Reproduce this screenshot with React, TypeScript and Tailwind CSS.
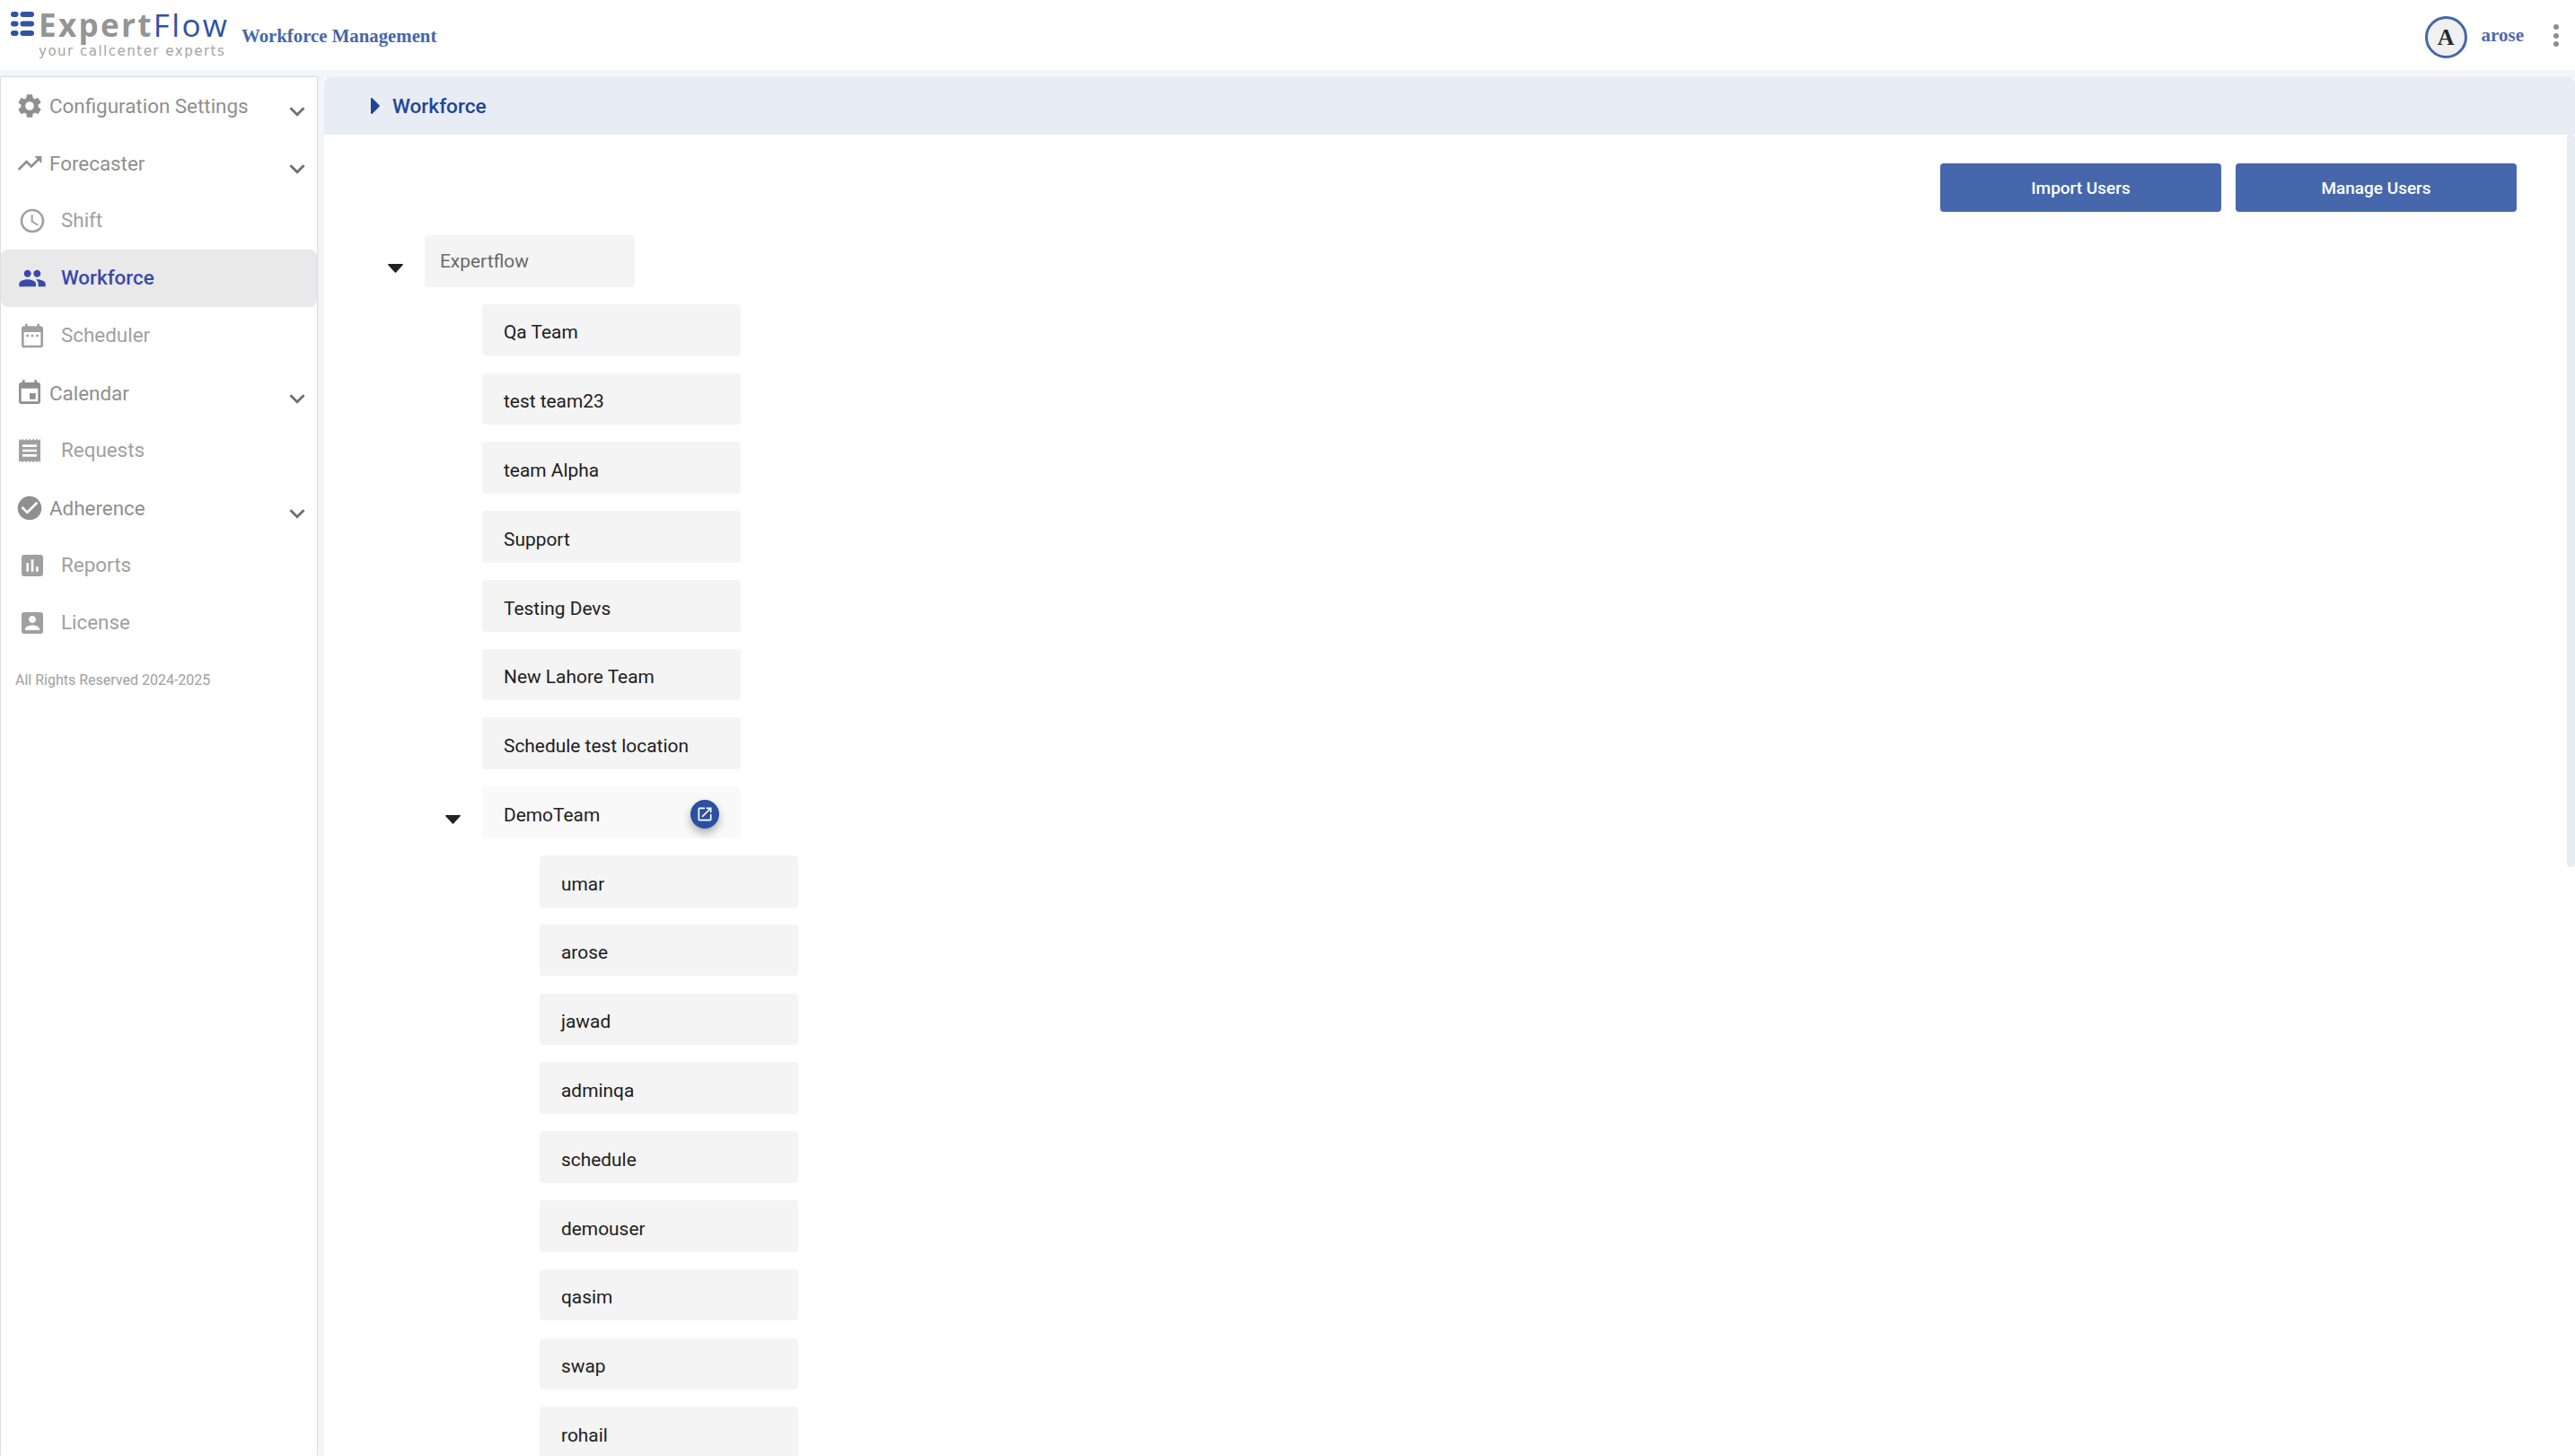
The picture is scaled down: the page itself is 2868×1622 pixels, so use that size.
import React from 'react';

const paths = {
  settings: 'M19.14 12.94c.04-.3.06-.61.06-.94 0-.32-.02-.64-.07-.94l2.03-1.58c.18-.14.23-.41.12-.61l-1.92-3.32c-.12-.22-.37-.29-.59-.22l-2.39.96c-.5-.38-1.03-.7-1.62-.94l-.36-2.54c-.04-.24-.24-.41-.48-.41h-3.84c-.24 0-.43.17-.47.41l-.36 2.54c-.59.24-1.13.57-1.62.94l-2.39-.96c-.22-.08-.47 0-.59.22L2.74 8.87c-.12.21-.08.47.12.61l2.03 1.58c-.05.3-.09.63-.09.94s.02.64.07.94l-2.03 1.58c-.18.14-.23.41-.12.61l1.92 3.32c.12.22.37.29.59.22l2.39-.96c.5.38 1.03.7 1.62.94l.36 2.54c.05.24.24.41.48.41h3.84c.24 0 .44-.17.47-.41l.36-2.54c.59-.24 1.13-.56 1.62-.94l2.39.96c.22.08.47 0 .59-.22l1.92-3.32c.12-.22.07-.47-.12-.61l-2.01-1.58zM12 15.6c-1.98 0-3.6-1.62-3.6-3.6s1.62-3.6 3.6-3.6 3.6 1.62 3.6 3.6-1.62 3.6-3.6 3.6z',
  trending: 'M16 6l2.29 2.29-4.88 4.88-4-4L2 16.59 3.41 18l6-6 4 4 6.3-6.29L22 12V6z',
  clock: 'M11.99 2C6.47 2 2 6.48 2 12s4.47 10 9.99 10C17.52 22 22 17.52 22 12S17.52 2 11.99 2zM12 20c-4.42 0-8-3.58-8-8s3.58-8 8-8 8 3.58 8 8-3.58 8-8 8zM12.5 7H11v6l5.25 3.15.75-1.23-4.5-2.67z',
  people: 'M16 11c1.66 0 2.99-1.34 2.99-3S17.66 5 16 5c-1.66 0-3 1.34-3 3s1.34 3 3 3zm-8 0c1.66 0 2.99-1.34 2.99-3S9.66 5 8 5C6.34 5 5 6.34 5 8s1.34 3 3 3zm0 2c-2.33 0-7 1.17-7 3.5V19h14v-2.5c0-2.33-4.67-3.5-7-3.5zm8 0c-.29 0-.62.02-.97.05 1.16.84 1.97 1.97 1.97 3.45V19h6v-2.5c0-2.33-4.67-3.5-7-3.5z',
  dateRange: 'M7 11h2v2H7zm4 0h2v2h-2zm4 0h2v2h-2zM19 4h-1V2h-2v2H8V2H6v2H5c-1.1 0-2 .9-2 2v14c0 1.1.9 2 2 2h14c1.1 0 2-.9 2-2V6c0-1.1-.9-2-2-2zm0 16H5V9h14z',
  event: 'M17 12h-5v5h5v-5zM16 1v2H8V1H6v2H5c-1.11 0-1.99.9-1.99 2L3 19c0 1.1.89 2 2 2h14c1.1 0 2-.9 2-2V5c0-1.1-.9-2-2-2h-1V1h-2zm3 18H5V8h14v11z',
  receipt: 'M18 17H6v-2h12v2zm0-4H6v-2h12v2zm0-4H6V7h12v2zM3 22l1.5-1.5L6 22l1.5-1.5L9 22l1.5-1.5L12 22l1.5-1.5L15 22l1.5-1.5L18 22l1.5-1.5L21 22V2l-1.5 1.5L18 2l-1.5 1.5L15 2l-1.5 1.5L12 2l-1.5 1.5L9 2 7.5 3.5 6 2 4.5 3.5 3 2v20z',
  check: 'M12 2C6.48 2 2 6.48 2 12s4.48 10 10 10 10-4.48 10-10S17.52 2 12 2zm-2 15l-5-5 1.41-1.41L10 14.17l7.59-7.59L19 8l-9 9z',
  chart: 'M19 3H5c-1.1 0-2 .9-2 2v14c0 1.1.9 2 2 2h14c1.1 0 2-.9 2-2V5c0-1.1-.9-2-2-2zM9 17H7v-7h2v7zm4 0h-2V7h2v10zm4 0h-2v-4h2v4z',
  account: 'M3 5v14c0 1.1.89 2 2 2h14c1.1 0 2-.9 2-2V5c0-1.1-.9-2-2-2H5c-1.11 0-2 .9-2 2zm12 4c0 1.66-1.34 3-3 3s-3-1.34-3-3 1.34-3 3-3 3 1.34 3 3zm-9 8c0-2 4-3.1 6-3.1s6 1.1 6 3.1v1H6v-1z',
  expand: 'M16.59 8.59L12 13.17 7.41 8.59 6 10l6 6 6-6z',
  openNew: 'M19 19H5V5h7V3H5c-1.11 0-2 .9-2 2v14c0 1.1.89 2 2 2h14c1.1 0 2-.9 2-2v-7h-2v7zM14 3v2h3.59l-9.83 9.83 1.41 1.41L19 6.41V10h2V3h-7z',
};

function Icon({ d, className }: { d: string; className: string }) {
  return (
    <svg viewBox="0 0 24 24" fill="currentColor" className={className}>
      <path d={d} />
    </svg>
  );
}

function Logo() {
  return (
    <div className="flex items-start pl-[12px] pt-[9px]">
      <svg viewBox="0 0 26 27" className="w-[26px] h-[27px] mt-[4px] shrink-0" fill="#2f53a5">
        <rect x="0" y="0" width="8.5" height="6" rx="3" />
        <rect x="10.5" y="0" width="15.5" height="6" rx="3" />
        <rect x="0" y="10.5" width="8.5" height="6" rx="3" />
        <rect x="10.5" y="10.5" width="15.5" height="6" rx="3" />
        <rect x="0" y="21" width="8.5" height="6" rx="3" />
        <rect x="10.5" y="21" width="15.5" height="6" rx="3" />
      </svg>
      <div className="ml-[5px] flex flex-col w-[212px]">
        <div className="h-[38px] text-[35px] leading-[38px] font-bold tracking-[2.35px] font-['Open_Sans',sans-serif] whitespace-nowrap">
          <span className="text-[#939596]">Expert</span>
          <span className="text-[#2f53a5] font-normal">Flow</span>
        </div>
        <div className="mt-[1px] text-[15px] leading-[18px] tracking-[1.5px] text-[#a3a5a6] font-['DejaVu_Sans',sans-serif] whitespace-nowrap">
          your callcenter experts
        </div>
      </div>
    </div>
  );
}

function Header() {
  return (
    <header className="h-[78px] bg-white flex items-start shrink-0">
      <Logo />
      <div className="ml-[14px] mt-[27px] text-[20.8px] leading-[26px] font-bold text-[#4467aa] font-['Liberation_Serif',serif] whitespace-nowrap">
        Workforce Management
      </div>
      <div className="ml-auto flex items-center h-[78px]">
        <div className="w-[47px] h-[47px] rounded-full border-[3px] border-[#4467aa] bg-[#f0f0f0] flex items-center justify-center text-[26px] font-bold text-[#2b2b2b] font-['Liberation_Serif',serif] mt-[4px]">
          A
        </div>
        <div className="ml-[16px] text-[21px] font-bold text-[#4f6aab] font-['Liberation_Serif',serif] mt-[2px]">arose</div>
        <div className="ml-[33px] mr-[18px] flex flex-col gap-[3.5px] mt-[1px]">
          <span className="w-[6px] h-[6px] rounded-full bg-[#8e8e8e]" />
          <span className="w-[6px] h-[6px] rounded-full bg-[#8e8e8e]" />
          <span className="w-[6px] h-[6px] rounded-full bg-[#8e8e8e]" />
        </div>
      </div>
    </header>
  );
}

const navItems = [
  { label: 'Configuration Settings', icon: paths.settings, parent: true },
  { label: 'Forecaster', icon: paths.trending, parent: true },
  { label: 'Shift', icon: paths.clock },
  { label: 'Workforce', icon: paths.people, active: true },
  { label: 'Scheduler', icon: paths.dateRange },
  { label: 'Calendar', icon: paths.event, parent: true },
  { label: 'Requests', icon: paths.receipt, shiftLeft: true },
  { label: 'Adherence', icon: paths.check, parent: true },
  { label: 'Reports', icon: paths.chart },
  { label: 'License', icon: paths.account },
];

function Sidebar() {
  return (
    <aside className="w-[352px] ml-[1px] shrink-0 bg-white shadow-[0_0_2px_rgba(0,0,0,0.3)]">
      {navItems.map((item) => {
        if (item.parent) {
          return (
            <div key={item.label} className="h-[64px] flex items-center pl-[16px] text-[#8f8f8f]">
              <Icon d={item.icon} className="w-[32px] h-[32px] shrink-0" />
              <span className="ml-[6px] pt-[1px] text-[22.4px] font-['Roboto',sans-serif]">{item.label}</span>
              <Icon d={paths.expand} className="w-[34px] h-[34px] ml-auto mr-[5px] mt-[12px] text-[#6f6f6f]" />
            </div>
          );
        }
        return (
          <div
            key={item.label}
            className={`h-[64px] flex items-center rounded-[8px] ${item.shiftLeft ? 'pl-[16px]' : 'pl-[19px]'} ${
              item.active ? 'bg-[#e9e9e9] text-[#3949ab] font-medium' : 'text-[#a0a0a0]'
            }`}
          >
            <Icon d={item.icon} className="w-[32px] h-[32px] shrink-0" />
            <span className={`${item.shiftLeft ? 'ml-[19px]' : 'ml-[16px]'} text-[22.4px] font-['Roboto',sans-serif]`}>{item.label}</span>
          </div>
        );
      })}
      <p className="mt-[21px] pl-[16px] text-[16px] leading-[22px] text-[#a0a0a0] font-['Roboto',sans-serif]">
        All Rights Reserved 2024-2025
      </p>
    </aside>
  );
}

function Caret() {
  return (
    <svg viewBox="0 0 17 10" className="w-[17px] h-[10px] mt-[32px] shrink-0" fill="#222222">
      <path d="M0.8 0h15.4c.7 0 1 .8.5 1.3L9.1 9.4c-.3.3-.9.3-1.2 0L.3 1.3C-.2.8.1 0 .8 0z" />
    </svg>
  );
}

function LeafRow({ label }: { label: string }) {
  return (
    <div className="w-[288px] h-[57.6px] rounded-[4px] bg-[#f4f4f4] flex items-center pl-[24px] pt-[7px] text-[#202020] text-[20.9px] font-['Roboto',sans-serif]">
      {label}
    </div>
  );
}

const teams = ['Qa Team', 'test team23', 'team Alpha', 'Support', 'Testing Devs', 'New Lahore Team', 'Schedule test location'];
const users = ['umar', 'arose', 'jawad', 'adminqa', 'schedule', 'demouser', 'qasim', 'swap', 'rohail'];

function Tree() {
  return (
    <div className="pl-[71px] mt-[26px] flex flex-col gap-[19.2px]">
      <div className="flex items-start h-[57.6px]">
        <Caret />
        <div className="ml-[24px] w-[234px] h-[57.6px] rounded-[4px] bg-[#f4f4f4] flex items-center pl-[17px] pt-[1px] text-[#6a6a6a] text-[20.9px] font-['Roboto',sans-serif]">
          Expertflow
        </div>
      </div>
      <div className="pl-[105px] flex flex-col gap-[19.2px]">
        {teams.map((team) => (
          <LeafRow key={team} label={team} />
        ))}
      </div>
      <div className="pl-[64px] flex items-start h-[57.6px]">
        <Caret />
        <div className="ml-[24px] w-[288px] h-[57.6px] rounded-[4px] bg-[#f9f9f9] flex items-center justify-between pl-[24px] pr-[24px] text-[#202020] text-[20.9px] font-['Roboto',sans-serif]">
          <span className="pt-[7px]">DemoTeam</span>
          <span className="mt-[4px] w-[32px] h-[32px] rounded-full bg-[#2a50a0] flex items-center justify-center text-white shadow-[0_5px_10px_rgba(0,0,0,0.3)]">
            <Icon d={paths.openNew} className="w-[20px] h-[20px]" />
          </span>
        </div>
      </div>
      <div className="pl-[169px] flex flex-col gap-[19.2px]">
        {users.map((user) => (
          <LeafRow key={user} label={user} />
        ))}
      </div>
    </div>
  );
}

export default function App() {
  return (
    <div className="h-screen w-full overflow-hidden flex flex-col bg-[#f3f5fa]">
      <Header />
      <div className="flex flex-1 min-h-0 pt-[8px]">
        <Sidebar />
        <main className="relative ml-[8px] flex-1 min-w-0 bg-white flex flex-col overflow-hidden">
          <div className="h-[64px] shrink-0 bg-[#e8ecf5] rounded-tl-[6px] rounded-tr-[6px] flex items-center pl-[52px]">
            <svg viewBox="0 0 10 18" className="w-[10px] h-[18px]" fill="#1e4598">
              <path d="M0 1.2C0 .2 1.1-.3 1.9.4l7.6 7.8c.4.4.4 1.1 0 1.6l-7.6 7.8c-.8.7-1.9.2-1.9-.8z" />
            </svg>
            <span className="ml-[14px] pt-[1px] text-[22.6px] font-medium text-[#1e4598] font-['Roboto',sans-serif]">Workforce</span>
          </div>
          <div className="flex justify-end gap-[16px] pr-[65px] pt-[32px] shrink-0">
            <button className="w-[313px] h-[54px] pt-[2px] rounded-[4px] bg-[#4667ab] text-white text-[19px] font-medium font-['Roboto',sans-serif]">Import Users</button>
            <button className="w-[313px] h-[54px] pt-[2px] rounded-[4px] bg-[#4667ab] text-white text-[19px] font-medium font-['Roboto',sans-serif]">Manage Users</button>
          </div>
          <Tree />
          <div className="absolute right-0 top-[64px] w-[9px] h-[816px] rounded-[4px] bg-[#e8ecf5]" />
        </main>
      </div>
    </div>
  );
}
